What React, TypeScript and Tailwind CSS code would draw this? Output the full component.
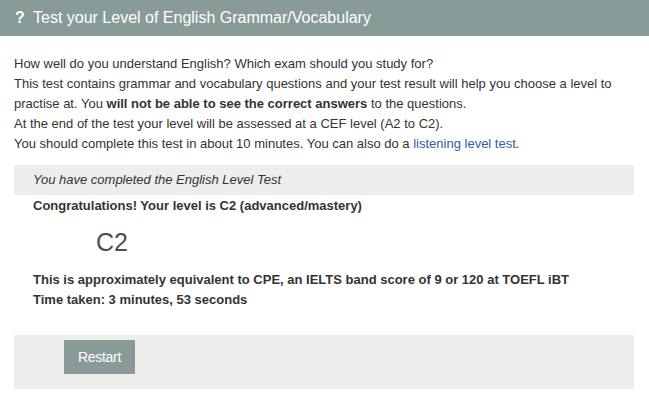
import React from 'react';

const App: React.FC = () => {
    return (
        <div className="w-[649px] h-[403px] bg-white text-[#333] overflow-hidden" style={{ fontFamily: '"Liberation Sans", Arial, sans-serif' }}>
            {/* header bar */}
            <div className="h-[36px] bg-[#899b99] flex items-center pl-[15px] text-white text-[16px]">
                <span className="font-bold w-[18px]">?</span>
                <span>Test your Level of English Grammar/Vocabulary</span>
            </div>

            <div className="px-[14px] pt-[18px] text-[13px] leading-[20px]">
                <p>How well do you understand English? Which exam should you study for?</p>
                <p>
                    This test contains grammar and vocabulary questions and your test result will help you choose a level to
                    practise at. You <b>will not be able to see the correct answers</b> to the questions.
                </p>
                <p>At the end of the test your level will be assessed at a CEF level (A2 to C2).</p>
                <p>
                    You should complete this test in about 10 minutes. You can also do a{' '}
                    <a href="#" className="text-[#2f5ca8]">listening level test</a>.
                </p>

                <div className="mt-[11px] w-[620px] h-[30px] bg-[#ededed] flex items-center pl-[19px] italic">
                    You have completed the English Level Test
                </div>

                <div className="pl-[19px]">
                    <p className="font-bold mt-[1px]">Congratulations! Your level is C2 (advanced/mastery)</p>
                    <p className="text-[25px] leading-[30px] text-[#4b4f57] pl-[63px] mt-[11px]">C2</p>
                    <p className="font-bold mt-[13px]">This is approximately equivalent to CPE, an IELTS band score of 9 or 120 at TOEFL iBT</p>
                    <p className="font-bold">Time taken: 3 minutes, 53 seconds</p>
                </div>

                <div className="mt-[25px] w-[620px] h-[54px] bg-[#ededed] pl-[50px] pt-[5px]">
                    <button className="w-[71px] h-[34px] bg-[#899b99] text-white text-[14px] tracking-[-0.3px]">Restart</button>
                </div>
            </div>
        </div>
    );
};

export default App;
